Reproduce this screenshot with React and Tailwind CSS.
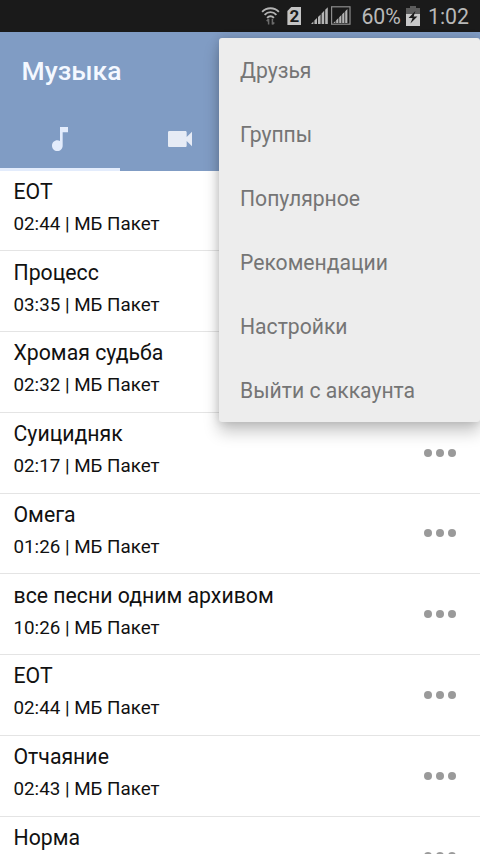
import React from 'react';

const songs = [
  { title: 'ЕОТ', time: '02:44' },
  { title: 'Процесс', time: '03:35' },
  { title: 'Хромая судьба', time: '02:32' },
  { title: 'Суицидняк', time: '02:17' },
  { title: 'Омега', time: '01:26' },
  { title: 'все песни одним архивом', time: '10:26' },
  { title: 'ЕОТ', time: '02:44' },
  { title: 'Отчаяние', time: '02:43' },
  { title: 'Норма' },
];

const menuItems = ['Друзья', 'Группы', 'Популярное', 'Рекомендации', 'Настройки', 'Выйти с аккаунта'];

function WifiIcon() {
  return (
    <svg width="19" height="20" viewBox="0 0 20 20" fill="none" stroke="#b4b4b4" strokeWidth="2">
      <path d="M1.2 5.6C6 0.6 14 0.6 18.8 5.6" />
      <path d="M3.8 8.8C7.4 5 12.6 5 16.2 8.8" />
      <path d="M6.4 12C8.6 9.6 11.4 9.6 13.6 12" />
      <path d="M8 19v-6M6 15.4L8 13.2M12 13v6M14 16.8L12 19" stroke="#6b6b6b" strokeWidth="1.6" />
    </svg>
  );
}

function SimIcon() {
  return (
    <div className="flex h-[18px] w-[14px] items-center justify-center bg-[#c4c4c4] text-[17px] leading-none font-bold text-[#1a1a1a] [clip-path:polygon(28%_0,100%_0,100%_100%,0_100%,0_22%)]">
      2
    </div>
  );
}

function SignalIcons() {
  return (
    <svg width="40" height="20" viewBox="0 0 40 20">
      <g fill="#b4b4b4">
        <path d="M0 18l2.4-2.4V18zM3.4 14.6L6 12v6H3.4zM7 11l2.6-2.6V18H7zM10.6 7.4l2.6-2.6V18h-2.6zM14.2 3.8l2.6-2.6V18h-2.6z" />
        <path d="M22.4 17l2-2v2zM25.2 14.2l2.2-2.2v5h-2.2zM28.2 11.2l2.2-2.2v8h-2.2zM31.2 8.2L33.4 6v11h-2.2zM34.2 5.2L36.4 3v14h-2.2z" />
      </g>
      <rect x="20.6" y="0.8" width="18.4" height="17.4" fill="none" stroke="#8c8c8c" strokeWidth="1.2" />
    </svg>
  );
}

function BatteryIcon() {
  return (
    <svg width="14" height="20" viewBox="0 0 14 20">
      <path d="M4 0h6v2h4v7H0V2h4z" fill="#5c5c5c" />
      <path d="M0 8h14v12H0z" fill="#c8c8c8" />
      <path d="M9.4 5L2.6 12h4L4.4 17.4 11.4 10.4H7.6z" fill="#1a1a1a" />
    </svg>
  );
}

function StatusBar() {
  return (
    <div className="flex h-8 items-center justify-end bg-[#1a1a1a] pr-[11px] text-[#b8b8b8]">
      <WifiIcon />
      <div className="ml-[7px]"><SimIcon /></div>
      <div className="ml-[10px]"><SignalIcons /></div>
      <span className="ml-[10px] pt-px text-[21.3px] leading-8">60%</span>
      <div className="ml-[5px]"><BatteryIcon /></div>
      <span className="ml-[8px] pt-px text-[21.3px] leading-8">1:02</span>
    </div>
  );
}

function Header() {
  return (
    <div className="flex h-[138.5px] flex-col bg-[#809cc4]">
      <h1 className="h-[74.5px] text-[26.5px] leading-[77px] pl-[21.5px] font-medium text-[#f4f8ff]">Музыка</h1>
      <div className="flex h-16">
        <div className="flex w-[120px] items-center justify-center border-b-3 border-[#e3ecfc]">
          <svg className="mt-[3px]" width="32" height="32" viewBox="0 0 24 24" fill="#e3ecfc">
            <path d="M12 3v10.55c-.59-.34-1.27-.55-2-.55-2.21 0-4 1.79-4 4s1.79 4 4 4 4-1.79 4-4V7h4V3h-6z" />
          </svg>
        </div>
        <div className="flex w-[120px] items-center justify-center">
          <svg width="32" height="32" viewBox="0 0 24 24" fill="#e6ebf5">
            <path d="M17 10.5V7c0-.55-.45-1-1-1H4c-.55 0-1 .45-1 1v10c0 .55.45 1 1 1h12c.55 0 1-.45 1-1v-3.5l4 4v-11l-4 4z" />
          </svg>
        </div>
      </div>
    </div>
  );
}

function SongRow({ song }) {
  return (
    <li className="flex h-[80.75px] shrink-0 items-center justify-between border-b border-[#e4e4e4] pr-6 pl-[13.5px]">
      <div className="h-full pt-[5.3px] text-[#111]">
        <p className="text-[21.25px] leading-8">{song.title}</p>
        {song.time && <p className="text-[18.8px] leading-8">{song.time} | МБ Пакет</p>}
      </div>
      <div className="flex gap-1">
        <span className="size-2 rounded-full bg-[#9a9a9a]" />
        <span className="size-2 rounded-full bg-[#9a9a9a]" />
        <span className="size-2 rounded-full bg-[#9a9a9a]" />
      </div>
    </li>
  );
}

function PopupMenu() {
  return (
    <ul className="absolute top-[37.5px] right-0 w-[261.5px] rounded-[3px] bg-[#ededed] shadow-[0_10px_16px_rgba(0,0,0,0.22),0_0_10px_rgba(0,0,0,0.15)]">
      {menuItems.map(item => (
        <li key={item} className="h-16 pt-px pl-[21.5px] text-[21.15px] leading-16 text-[#757575]">{item}</li>
      ))}
    </ul>
  );
}

function App() {
  return (
    <div className="relative flex h-[854px] w-[480px] flex-col overflow-hidden bg-white font-['Roboto',sans-serif]">
      <StatusBar />
      <Header />
      <ul className="flex min-h-0 flex-1 flex-col overflow-hidden">
        {songs.map((song, i) => (
          <SongRow key={i} song={song} />
        ))}
      </ul>
      <PopupMenu />
    </div>
  );
}

export default App;
